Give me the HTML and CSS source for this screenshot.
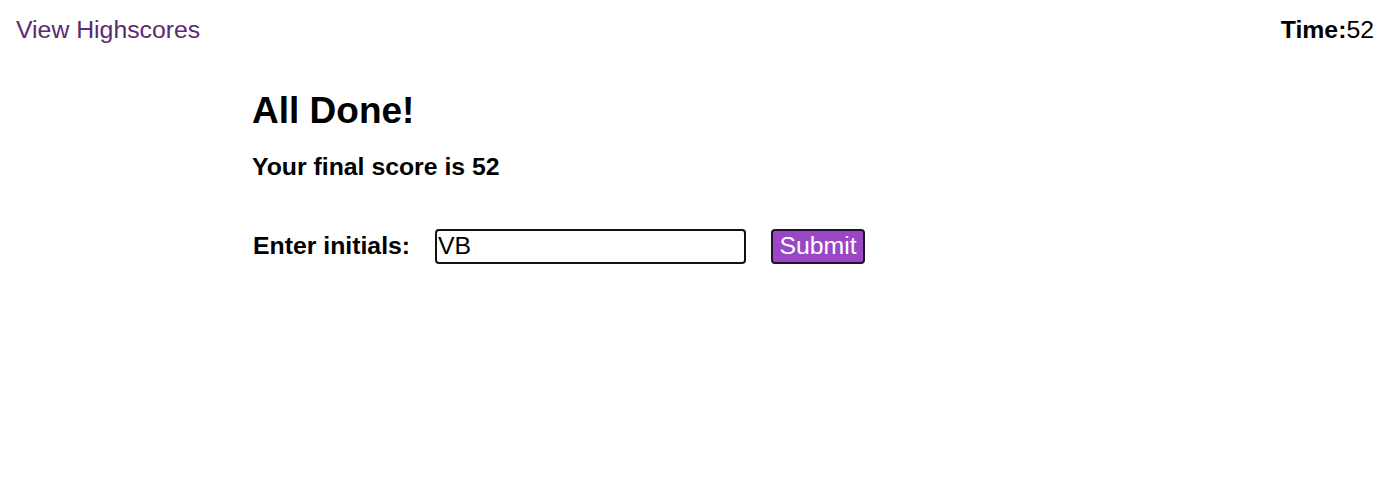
FILE: index.html
```html
<!DOCTYPE html>
<html lang="en">
<head>
<meta charset="utf-8">
<title>Quiz</title>
<link rel="stylesheet" href="styles.css">
</head>
<body>
<header class="top">
  <a class="highscores" href="#">View Highscores</a>
  <div class="timer"><b>Time:</b>52</div>
</header>
<main class="panel">
  <h1 class="title">All Done!</h1>
  <p class="score">Your final score is 52</p>
  <form class="entry">
    <label class="entry-label" for="initials">Enter initials:</label>
    <input class="entry-input" id="initials" type="text" value="VB">
    <button class="entry-btn" type="button">Submit</button>
  </form>
</main>
</body>
</html>
```
FILE: styles.css
```css
html, body {
  margin: 0;
  padding: 0;
  background: #ffffff;
}
body {
  font-family: "Liberation Sans", Arial, sans-serif;
  font-size: 24.8px;
  color: #000;
}
.top {
  display: flex;
  justify-content: space-between;
  align-items: baseline;
  padding: 16px 9px 0 16px;
  line-height: 28.5px;
}
.highscores {
  color: #5a2a72;
  text-decoration: none;
}
.timer b {
  font-weight: 700;
}
.panel {
  padding-left: 252px;
}
.title {
  margin: 45px 0 0;
  font-size: 37px;
  line-height: 42.5px;
  font-weight: 700;
}
.score {
  margin: 21px 0 0;
  font-weight: 700;
  line-height: 28.5px;
}
.entry {
  display: flex;
  align-items: center;
  margin-top: 47px;
}
.entry-label {
  font-weight: 700;
  margin-left: 1px;
  margin-right: 25px;
}
.entry-input {
  box-sizing: border-box;
  width: 311px;
  height: 35px;
  border: 2px solid #111;
  border-radius: 4px;
  padding: 0 1px;
  font-family: inherit;
  font-size: 24.8px;
  color: #000;
  outline: none;
}
.entry-btn {
  box-sizing: border-box;
  margin-left: 25px;
  width: 94px;
  height: 35px;
  padding: 0;
  background: #9a47c6;
  border: 2px solid #22102c;
  border-radius: 4px;
  color: #fff;
  font-family: inherit;
  font-size: 24.8px;
  line-height: 1;
}
```
